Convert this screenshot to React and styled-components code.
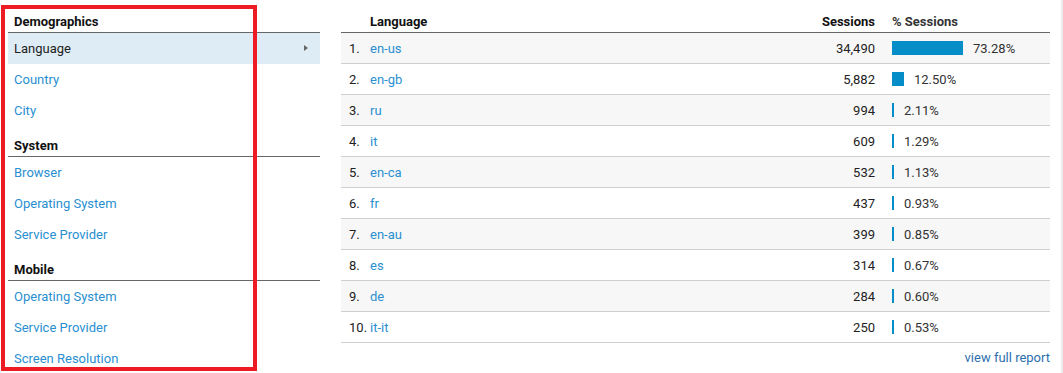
import React from 'react';
import styled, { createGlobalStyle } from 'styled-components';

const GlobalStyle = createGlobalStyle`
   body {
      margin: 0;
      background: #fff;
      font-family: Roboto, "Liberation Sans", Arial, sans-serif;
      font-size: 13px;
      color: #222;
      overflow: hidden;
   }
`

const sections = [
   { title: 'Demographics', items: ['Language', 'Country', 'City'] },
   { title: 'System', items: ['Browser', 'Operating System', 'Service Provider'] },
   { title: 'Mobile', items: ['Operating System', 'Service Provider', 'Screen Resolution'] },
];

const rows = [
   { lang: 'en-us', sessions: '34,490', pct: 73.28 },
   { lang: 'en-gb', sessions: '5,882', pct: 12.5 },
   { lang: 'ru', sessions: '994', pct: 2.11 },
   { lang: 'it', sessions: '609', pct: 1.29 },
   { lang: 'en-ca', sessions: '532', pct: 1.13 },
   { lang: 'fr', sessions: '437', pct: 0.93 },
   { lang: 'en-au', sessions: '399', pct: 0.85 },
   { lang: 'es', sessions: '314', pct: 0.67 },
   { lang: 'de', sessions: '284', pct: 0.6 },
   { lang: 'it-it', sessions: '250', pct: 0.53 },
];

function App() {
   return (
      <Page>
         <GlobalStyle />
         <Nav>
            {sections.map((s) => (
               <div key={s.title}>
                  <HeaderRow>{s.title}</HeaderRow>
                  {s.items.map((item, i) => {
                     const active = s.title === 'Demographics' && i === 0;
                     return (
                        <NavItem key={item} $active={active}>
                           {item}
                           {active && <Caret />}
                        </NavItem>
                     )
                  })}
               </div>
            ))}
         </Nav>

         <TableWrap>
            <Table>
               <HeaderRow>
                  <NumCol />
                  <LangCol>Language</LangCol>
                  <SessCol>Sessions</SessCol>
                  <PctCol>% Sessions</PctCol>
               </HeaderRow>
               {rows.map((r, i) => (
                  <Row key={r.lang} $odd={i % 2 === 0}>
                     <NumCol>{i + 1}.</NumCol>
                     <LangCol><Link>{r.lang}</Link></LangCol>
                     <SessCol>{r.sessions}</SessCol>
                     <PctCol>
                        <Bar style={{ width: Math.max(2, Math.round(r.pct * 0.97)) }} />
                        {r.pct.toFixed(2)}%
                     </PctCol>
                  </Row>
               ))}
            </Table>
            <Footer>
               <FooterLink>view full report</FooterLink>
            </Footer>
         </TableWrap>

         <Highlight />
      </Page>
   )
}

export default App

const Page = styled.div`
   position: relative;
   display: flex;
   gap: 21px;
   padding: 2px 0 0 8px;
   height: 373px;
   box-sizing: border-box;
   border-right: 2px solid #ececec;
`

const Nav = styled.div`
   width: 312px;
   flex-shrink: 0;
`

const HeaderRow = styled.div`
   display: flex;
   align-items: flex-end;
   height: 31px;
   padding: 0 6px 2px;
   box-sizing: border-box;
   border-bottom: 1px solid #666;
   font-weight: 700;
   line-height: 16px;
   color: #111;
`

const NavItem = styled.div`
   position: relative;
   display: flex;
   align-items: center;
   height: 31px;
   padding: 0 6px;
   background: ${(p) => (p.$active ? '#deedf5' : 'transparent')};
   color: ${(p) => (p.$active ? '#222' : '#2a8fd0')};
   cursor: pointer;
`

const Caret = styled.span`
   position: absolute;
   right: 12px;
   top: 12px;
   width: 0;
   height: 0;
   border-top: 3.5px solid transparent;
   border-bottom: 3.5px solid transparent;
   border-left: 4px solid #666;
`

const TableWrap = styled.div`
   width: 709px;
   flex-shrink: 0;
`

const Table = styled.div`
   display: flex;
   flex-direction: column;
`

const Row = styled.div`
   display: flex;
   align-items: center;
   height: 31px;
   padding: 0 6px;
   box-sizing: border-box;
   border-bottom: 1px solid #d0d0d0;
   background: ${(p) => (p.$odd ? '#f7f7f7' : '#fff')};
`

const NumCol = styled.div`
   width: 23px;
   padding-left: 2px;
   box-sizing: border-box;
   color: #222;
`

const LangCol = styled.div`
   flex: 1;
`

const Link = styled.span`
   color: #2a8fd0;
   cursor: pointer;
`

const SessCol = styled.div`
   width: 120px;
   text-align: right;
   padding-right: 17px;
   box-sizing: border-box;
`

const PctCol = styled.div`
   width: 152px;
   display: flex;
   align-items: center;
   color: #333;
`

const Bar = styled.span`
   display: inline-block;
   height: 14px;
   margin-right: 10px;
   background: #058dc7;
`

const Footer = styled.div`
   display: flex;
   justify-content: flex-end;
   padding-top: 7px;
   line-height: 16px;
`

const FooterLink = styled.span`
   color: #2d6fae;
   cursor: pointer;
`

const Highlight = styled.div`
   position: absolute;
   left: 1px;
   top: 5px;
   width: 256px;
   height: 366px;
   box-sizing: border-box;
   border: 4px solid #ed1c24;
   pointer-events: none;
`
